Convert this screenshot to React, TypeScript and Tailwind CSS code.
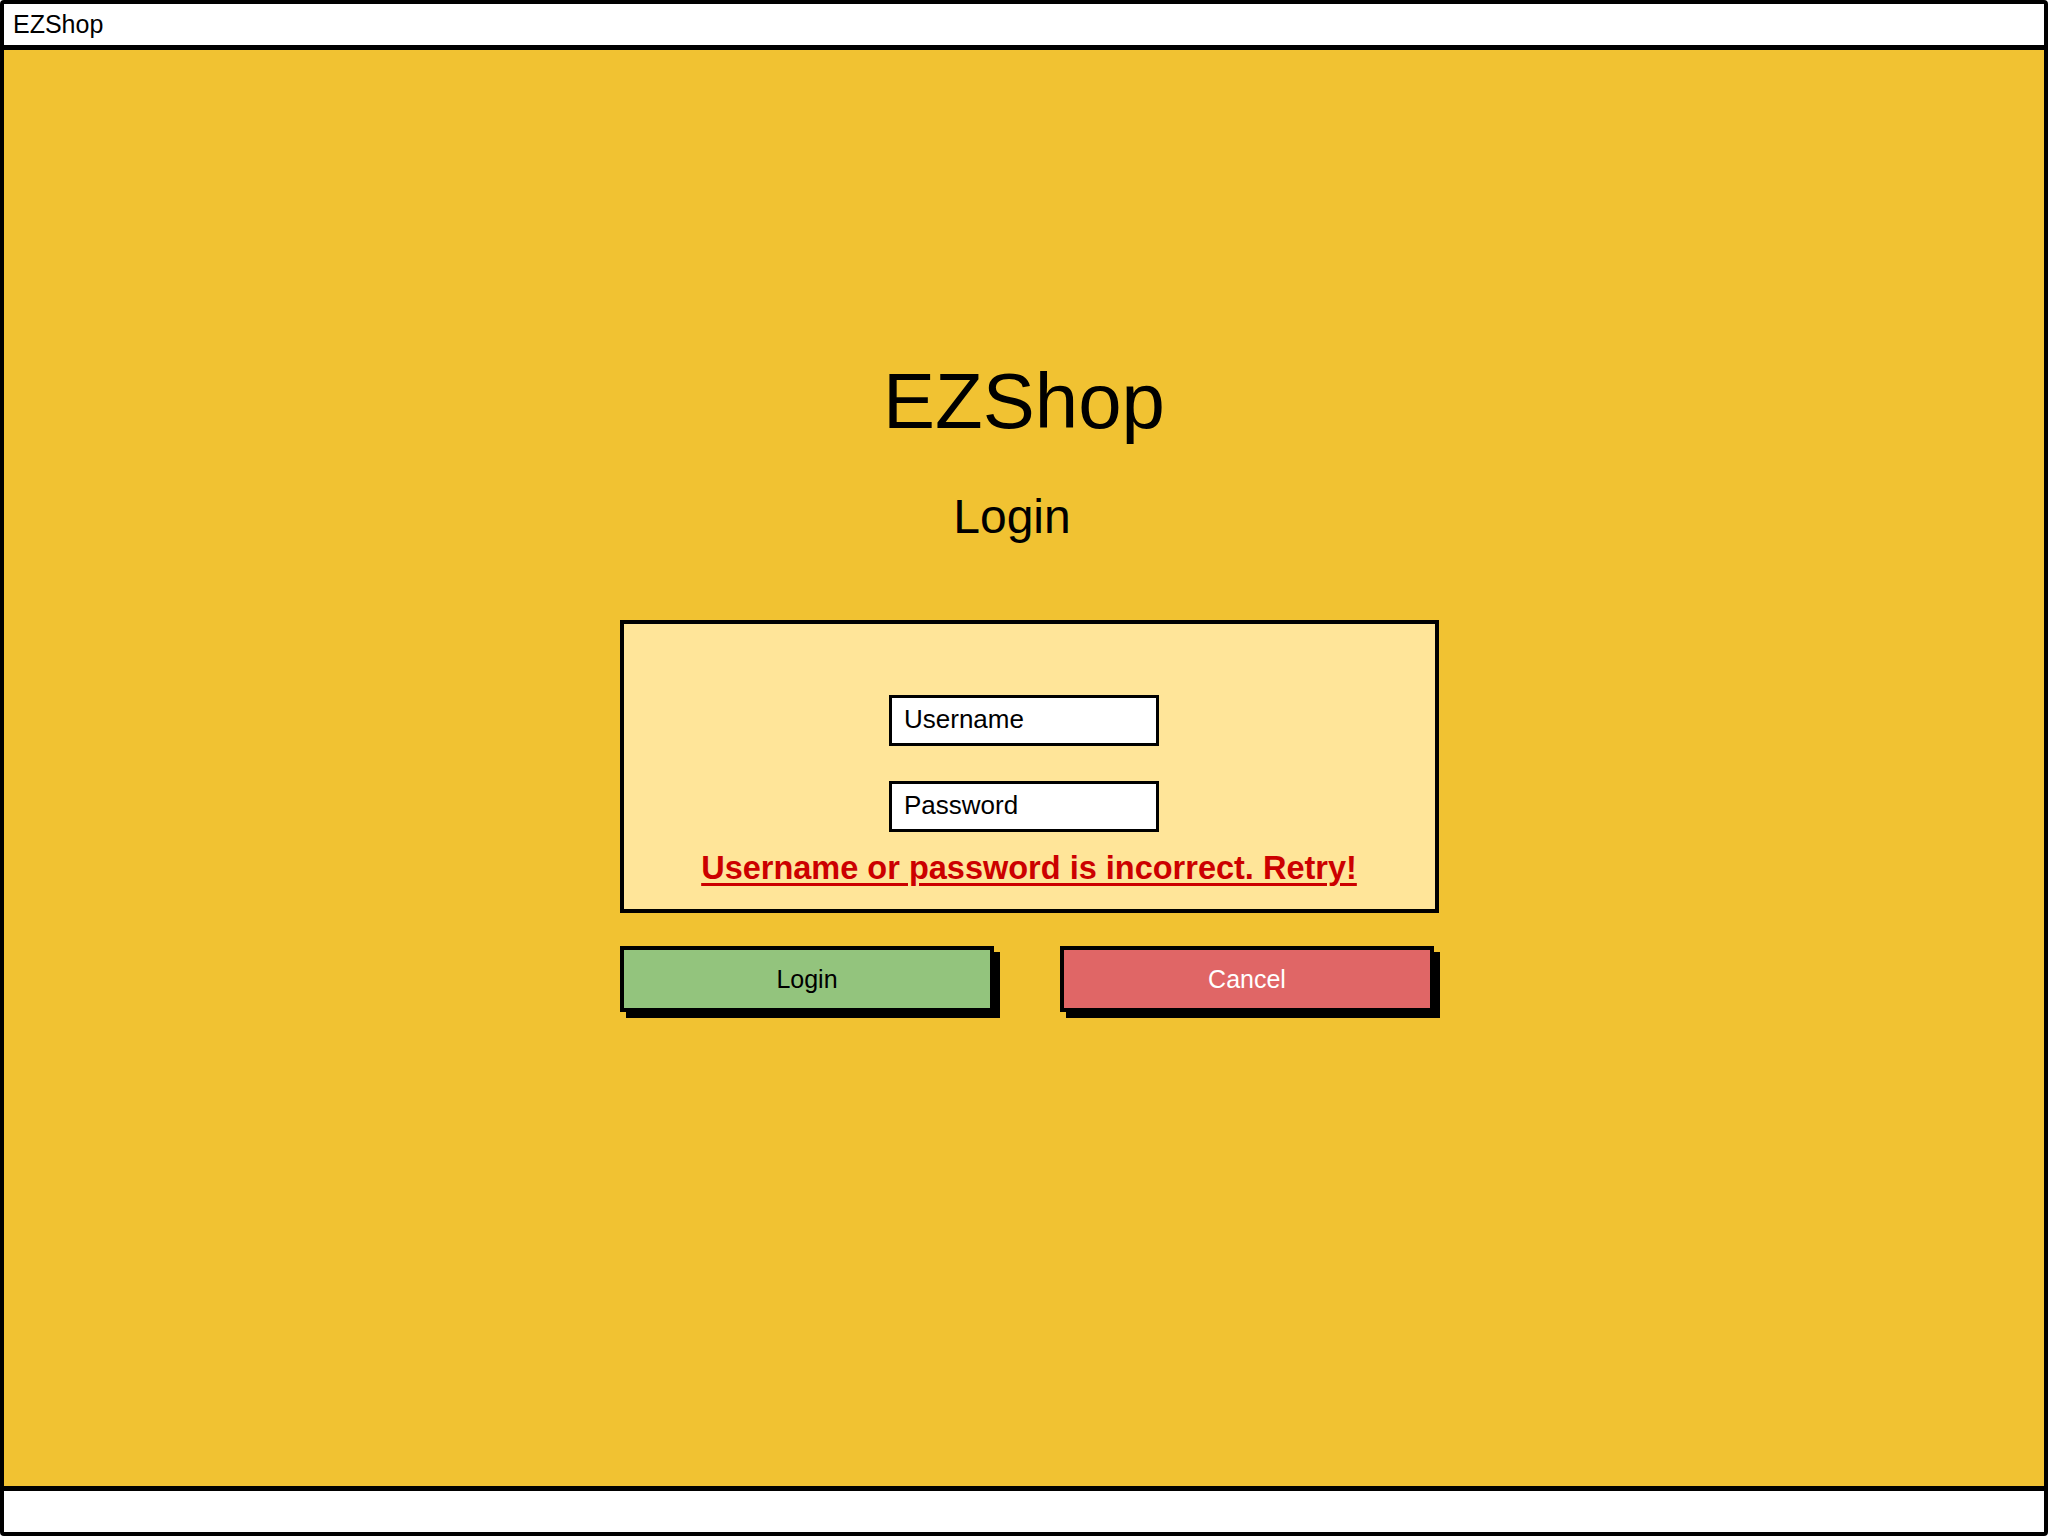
import React from "react";

export default function App() {
  const font = { fontFamily: '"Liberation Sans", Arial, sans-serif' };
  return (
    <div
      className="w-[2048px] h-[1536px] flex flex-col border-4 border-black rounded-[4px] overflow-hidden bg-white"
      style={font}
    >
      {/* top bar */}
      <div className="h-[46px] shrink-0 bg-white border-b-[5px] border-black flex items-center pl-[9px]">
        <span className="text-[25px] leading-none text-black">EZShop</span>
      </div>

      {/* main */}
      <div className="flex-1 bg-[#F1C232] flex flex-col items-center pt-[312px]">
        <h1 className="text-[78px] leading-none text-black">EZShop</h1>
        <h2 className="text-[48px] leading-none text-black mt-[53px] mr-[24px]">Login</h2>

        <div className="mt-[79px] ml-[10px] w-[819px] h-[293px] border-4 border-black bg-[#FFE599] flex flex-col items-center pt-[71px]">
          <div className="w-[270px] h-[51px] border-[3px] border-black bg-white flex items-center pl-[12px] pb-[4px] mr-[10px]">
            <span className="text-[26px] leading-none text-black">Username</span>
          </div>
          <div className="w-[270px] h-[51px] border-[3px] border-black bg-white flex items-center pl-[12px] pb-[4px] mt-[35px] mr-[10px]">
            <span className="text-[26px] leading-none text-black">Password</span>
          </div>
          <div className="mt-[20px] text-[32.5px] leading-none font-bold text-[#CC0000] underline underline-offset-[4px] decoration-[3px]">
            Username or password is incorrect. Retry!
          </div>
        </div>

        <div className="mt-[33px] ml-[6px] flex gap-[66px]">
          <div className="w-[374px] h-[66px] border-4 border-black bg-[#93C47D] shadow-[6px_6px_0_0_#000] flex items-center justify-center">
            <span className="text-[25px] leading-none text-black">Login</span>
          </div>
          <div className="w-[374px] h-[66px] border-4 border-black bg-[#E06666] shadow-[6px_6px_0_0_#000] flex items-center justify-center">
            <span className="text-[25px] leading-none text-white">Cancel</span>
          </div>
        </div>
      </div>

      {/* bottom bar */}
      <div className="h-[46px] shrink-0 bg-white border-t-[5px] border-black" />
    </div>
  );
}
